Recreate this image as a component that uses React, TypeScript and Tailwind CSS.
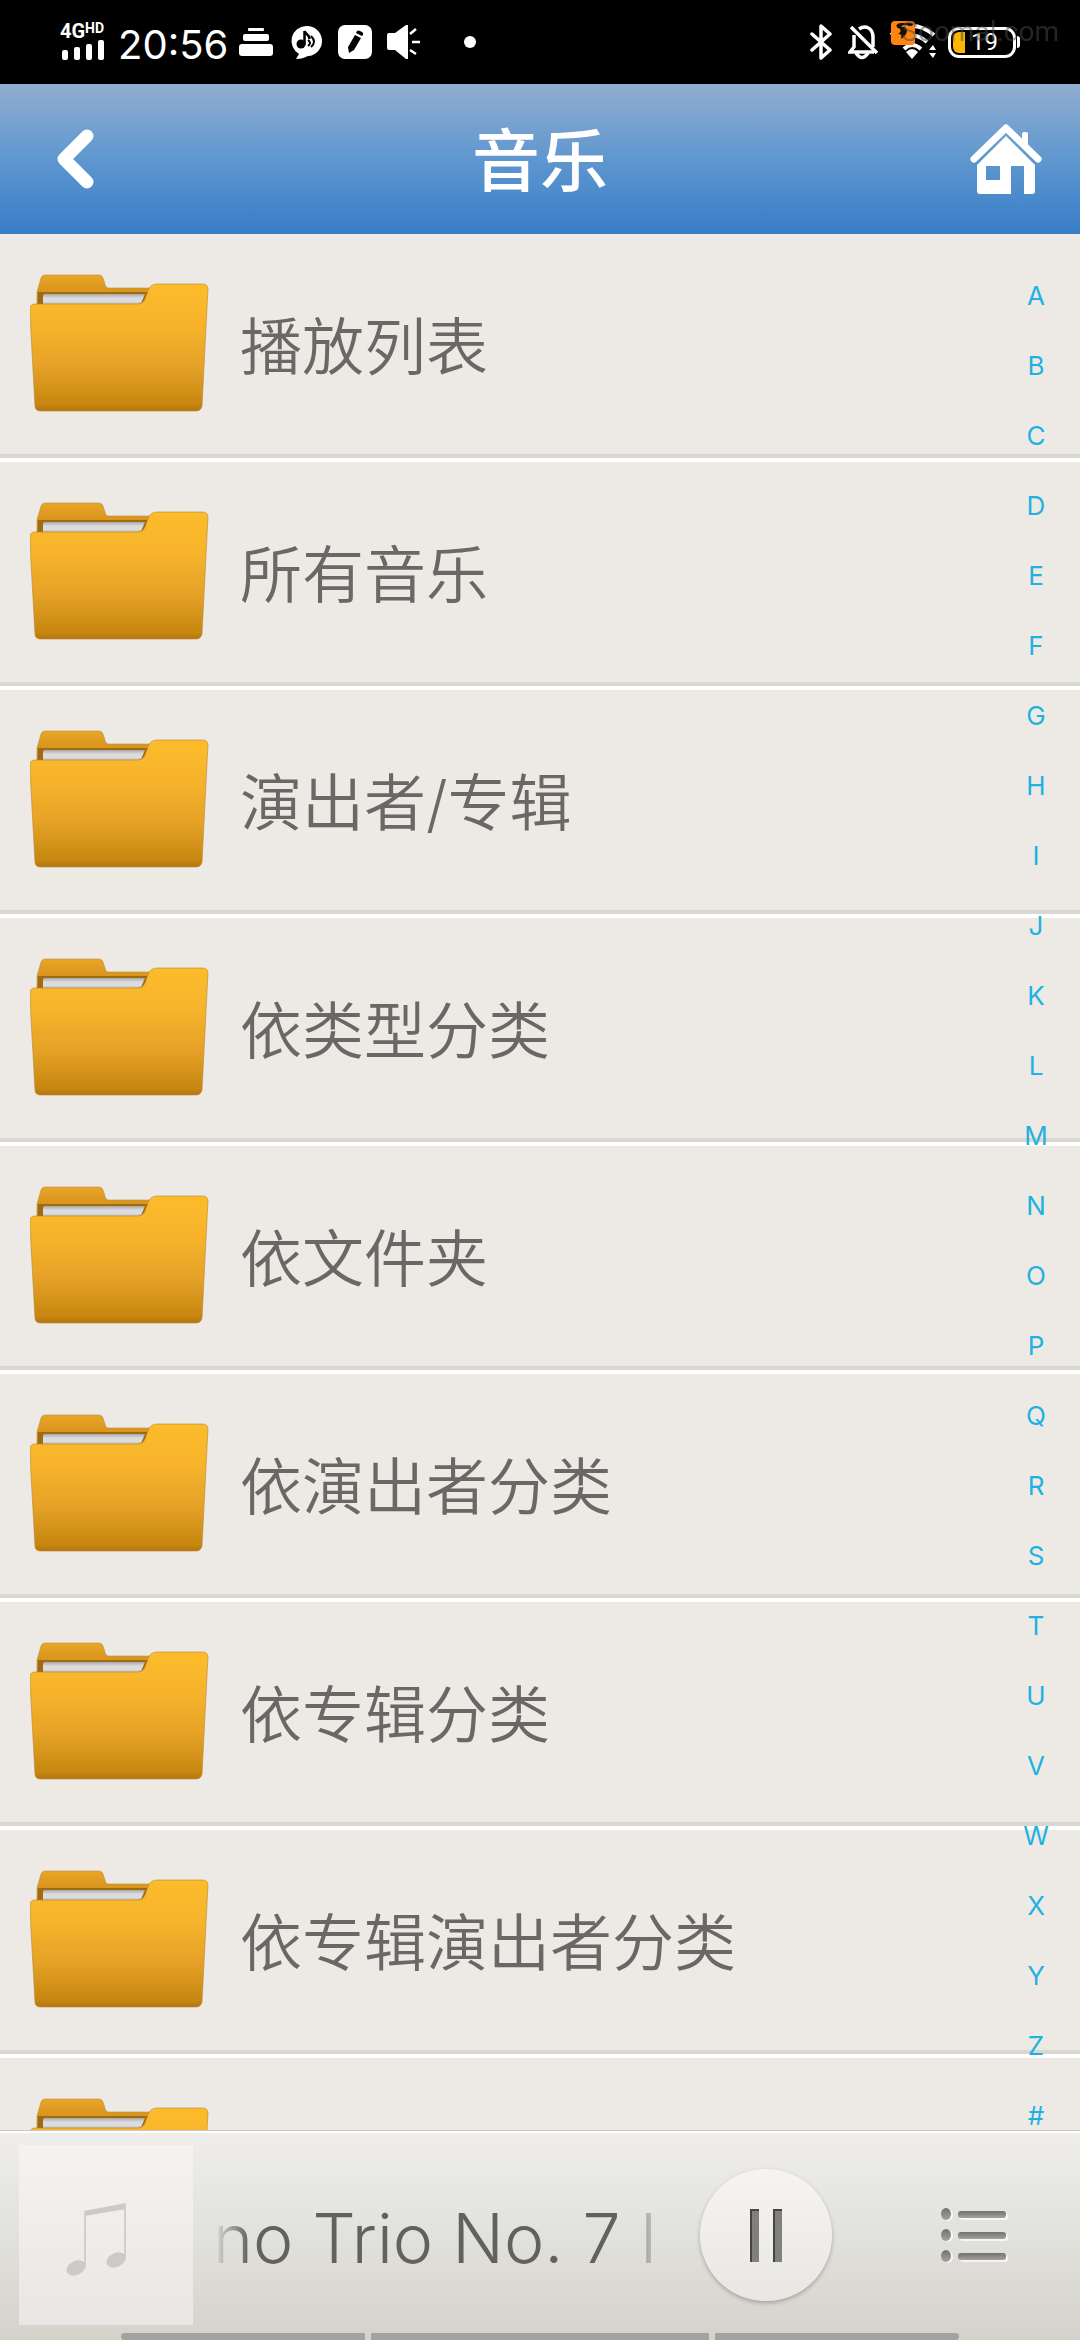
import React from "react";

const folders = [
  "播放列表",
  "所有音乐",
  "演出者/专辑",
  "依类型分类",
  "依文件夹",
  "依演出者分类",
  "依专辑分类",
  "依专辑演出者分类",
  "依作曲者分类",
];

const letters = "ABCDEFGHIJKLMNOPQRSTUVWXYZ#".split("");

function FolderIcon() {
  return (
    <svg width="180" height="140" viewBox="0 0 180 140" className="shrink-0" aria-hidden="true">
      <defs>
        <linearGradient id="front" x1="0" y1="0" x2="0" y2="1">
          <stop offset="0" stopColor="#fcbc2c" />
          <stop offset="0.3" stopColor="#f7b42b" />
          <stop offset="0.65" stopColor="#e5a227" />
          <stop offset="0.95" stopColor="#c6860f" />
          <stop offset="1" stopColor="#b4750f" />
        </linearGradient>
        <linearGradient id="back" x1="0" y1="0" x2="0" y2="1">
          <stop offset="0" stopColor="#e9a627" />
          <stop offset="0.5" stopColor="#d9951d" />
          <stop offset="1" stopColor="#a86c0c" />
        </linearGradient>
        <linearGradient id="paper" x1="0" y1="0" x2="0" y2="1">
          <stop offset="0" stopColor="#a9a8a6" />
          <stop offset="0.4" stopColor="#dcdcdf" />
          <stop offset="0.8" stopColor="#dcdcdf" />
          <stop offset="1" stopColor="#b9b4a8" />
        </linearGradient>
      </defs>
      <path d="M7 34V18L11 4q1-3 4-3h54q3 0 4 3l3 9q1 1 3 1h48l-6 20z" fill="url(#back)" stroke="#b98f45" strokeOpacity="0.6" />
      <path d="M8 18h110l-5 12H8z" fill="#a06a12" />
      <path d="M15 20h100l-3 7q-1 3-4 3H13v-8q0-2 2-2z" fill="url(#paper)" />
      <path d="M5 30h102q6 0 8-5l3-8q2-7 9-7h45q6 0 6 5l-1 18-5 99q-1 5-6 5H11q-6 0-6-5L1 60 0 35q0-5 5-5z" fill="url(#front)" stroke="#b98630" strokeOpacity="0.6" />
    </svg>
  );
}

function StatusBar() {
  return (
    <header className="relative flex h-[84px] shrink-0 items-center justify-between bg-black px-[60px] font-['Roboto',sans-serif] text-white">
      <div className="flex items-center">
        <div className="w-[46px]">
          <div className="flex items-start text-[20px] leading-[16px] font-bold">
            <span>4G</span>
            <span className="text-[14px] leading-[10px]">HD</span>
          </div>
          <svg width="46" height="22" viewBox="0 0 46 22" fill="#fff" aria-hidden="true">
            <rect x="2" y="11" width="6" height="10" rx="2" />
            <rect x="14" y="8" width="6" height="13" rx="2" />
            <rect x="26" y="5" width="6" height="16" rx="2" />
            <rect x="38" y="1" width="6" height="20" rx="2" />
          </svg>
        </div>
        <time className="ml-[12px] w-[108px] pt-[6px] font-['Inter',sans-serif] text-[40px] leading-[48px] whitespace-nowrap">20:56</time>
        <svg className="ml-[13px]" width="34" height="34" viewBox="0 0 34 34" fill="#fff" aria-hidden="true">
          <rect x="9" y="3" width="16" height="3" rx="1" />
          <rect x="4" y="9" width="26" height="7" rx="2" />
          <rect x="0" y="19" width="34" height="12" rx="3" />
        </svg>
        <svg className="ml-[16px]" width="34" height="34" viewBox="0 0 34 34" aria-hidden="true">
          <path d="M17 1a15 15 0 0 1 2 30c-4 2-7 3-12 3l3-5A15 15 0 0 1 17 1z" fill="#fff" />
          <circle cx="12" cy="19" r="4.5" />
          <path d="M15.500 20V6c1 4 5 3 5 8" fill="none" stroke="#000" strokeWidth="2.500" />
          <path d="M19 15q4 3 0 6M22 11q6 6 0 11" fill="none" stroke="#000" strokeWidth="2" />
        </svg>
        <svg className="ml-[15px]" width="34" height="34" viewBox="0 0 34 34" aria-hidden="true">
          <rect width="34" height="34" rx="7" fill="#fff" />
          <path d="M17 10l6 3-7 12-5 3-1-6zM18 8l1-2q1-1 3 0l2 1q2 1 1 3l-1 1z" />
        </svg>
        <svg className="ml-[15px]" width="36" height="34" viewBox="0 0 36 34" aria-hidden="true">
          <path d="M2 8h6L19 0h2v34h-2L8 25H2q-2 0-2-2V10q0-2 2-2z" fill="#fff" />
          <path d="M23 9l6-5M25 17h8M23 25l6 4" stroke="#fff" strokeWidth="2.500" />
        </svg>
        <span className="ml-[41px] size-[12px] rounded-full bg-white" />
      </div>
      <div className="flex items-center">
        <svg width="24" height="36" viewBox="0 0 24 36" fill="none" stroke="#fff" strokeWidth="3.500" strokeLinejoin="round" strokeLinecap="round" aria-hidden="true">
          <path d="M3 10l18 16-9 8V2l9 8L3 26" />
        </svg>
        <svg className="ml-[15px]" width="32" height="36" viewBox="0 0 32 36" fill="none" stroke="#fff" strokeWidth="3.500" aria-hidden="true">
          <path d="M6 11v12l-4 5h24M11 5c7-5 14 0 14 8v10" />
          <path d="M3 3l26 26" />
          <path d="M8 29q6 9 12 0" />
        </svg>
        <svg className="ml-[8px]" width="48" height="42" viewBox="0 0 48 42" aria-hidden="true">
          <path d="M3 14q21-18 43 0M10 21q14-13 29 0M16 28q8-8 17 0" fill="none" stroke="#fff" strokeWidth="4" />
          <path d="M24 38l-6-7q6-6 12 0z" fill="#fff" />
          <path d="M41 29l4-5 3 5zM41 32l4 5 3-5z" fill="#fff" />
          <rect x="3" y="0" width="24" height="24" rx="4" fill="#ff8410" />
          <path d="M13 2h9q3 0 3 2l-2 1h-4l2-1h-6l-2 2h3c6 2 2 9-3 12 1-4 0-5-3-5 4-2 3-5 0-6-3-2-1-5 3-5z" fill="#1a1005" />
        </svg>
        <div className="ml-[12px] flex items-center">
          <div className="flex h-[31px] w-[68px] items-center rounded-[11px] border-[3px] border-white pl-[2px]">
            <span className="h-[21px] w-[12px] rounded-l-[6px] bg-[#fbb503]" />
            <span className="ml-[6px] text-[24px] leading-[24px]">19</span>
          </div>
          <span className="ml-[1px] h-[12px] w-[3px] rounded-r-full bg-white" />
        </div>
      </div>
      <span className="absolute top-[14px] right-[21px] text-[28px] leading-[36px] text-[#4a4a4a] opacity-50">Soomal.com</span>
    </header>
  );
}

function TitleBar() {
  return (
    <div className="flex h-[150px] shrink-0 items-center justify-between bg-linear-to-b from-[#90add0] via-[#5f97cf] to-[#367dc8] px-[37px] text-white">
      <button aria-label="返回" className="flex w-[74px] pl-[17px]">
        <svg width="42" height="62" viewBox="0 0 42 62" fill="none" aria-hidden="true">
          <path d="M33 8L10 31l23 23" stroke="#fff" strokeWidth="13" strokeLinecap="round" strokeLinejoin="round" />
        </svg>
      </button>
      <h1 className="pt-[4px] text-[68px] leading-[88px] font-medium">音乐</h1>
      <button aria-label="主页" className="w-[74px]">
        <svg width="74" height="72" viewBox="0 0 74 72" fill="none" aria-hidden="true">
          <path d="M53 11q0-2 2-2h2q2 0 2 2v14l-6-6z" fill="#fff" />
          <path d="M5 36L37 5l32 31" stroke="#fff" strokeWidth="7" strokeLinecap="round" strokeLinejoin="round" />
          <path d="M37 13L8 42v26q0 3 3 3h31V43h13v28h8q3 0 3-3V42zM17 43v14h14V43z" fill="#fff" fillRule="evenodd" />
        </svg>
      </button>
    </div>
  );
}

function Player() {
  return (
    <footer className="flex h-[210px] shrink-0 flex-col border-t border-[#c9c8c4] bg-linear-to-b from-[#efeeeb] via-[#e1e1dd] to-[#d5d2ca]">
      <div className="flex h-[202px] items-center border-t-2 border-white pt-[4px] pl-[19px]">
        <div className="flex h-[180px] w-[174px] shrink-0 items-center justify-center bg-linear-to-b from-[#f5f2ef] to-[#e9e7e3] pt-[8px] pr-[18px]">
          <svg width="62" height="74" viewBox="0 0 62 74" fill="#cbcac8" aria-hidden="true">
            <path d="M18 9L60 1v6l-42 7z" />
            <path d="M19 9v54M59 3v54" stroke="#d0cfcd" strokeWidth="2" />
            <ellipse cx="10" cy="66" rx="10" ry="7" transform="rotate(-25 10 66)" />
            <ellipse cx="50" cy="58" rx="10" ry="7" transform="rotate(-25 50 58)" />
          </svg>
        </div>
        <p className="ml-[20px] min-w-0 flex-1 overflow-hidden pt-[6px] text-[68px] leading-[88px] font-light whitespace-nowrap text-[#62615e] [mask-image:linear-gradient(to_right,transparent,black_36px,black_calc(100%-36px),transparent)]">
          no Trio No. 7 I
        </p>
        <button aria-label="暂停" className="ml-[38px] flex size-[132px] shrink-0 items-center justify-center gap-[14px] rounded-full bg-linear-to-b from-[#f6f3f0] to-[#e9e7e4] shadow-[0_2px_4px_rgba(0,0,0,0.25)]">
          <span className="h-[53px] w-[9px] border-t-2 border-l-2 border-[#454545] bg-[#80807f]" />
          <span className="h-[53px] w-[9px] border-t-2 border-l-2 border-[#454545] bg-[#80807f]" />
        </button>
        <button aria-label="播放队列" className="mr-[70px] ml-[108px] shrink-0">
          <svg width="70" height="58" viewBox="0 0 70 58" aria-hidden="true">
            <defs>
              <linearGradient id="groove" x1="0" y1="0" x2="0" y2="1">
                <stop offset="0" stopColor="#72716f" />
                <stop offset="1" stopColor="#a3a2a0" />
              </linearGradient>
            </defs>
            {[8, 29, 50].map((y) => (
              <g key={y}>
                <ellipse cx="8" cy={y + 1} rx="5" ry="6" fill="#fff" fillOpacity="0.7" />
                <ellipse cx="6" cy={y} rx="5" ry="6" fill="url(#groove)" />
                <rect x="20" y={y - 1} width="48" height="7" rx="3" fill="#fff" fillOpacity="0.7" />
                <rect x="18" y={y - 3} width="48" height="7" rx="3" fill="url(#groove)" />
              </g>
            ))}
          </svg>
        </button>
      </div>
      <div className="mx-[121px] flex h-[7px] gap-[6px] overflow-hidden rounded-l-full rounded-r-full">
        <span className="w-[244px] bg-[#a3a29e]" />
        <span className="flex-1 bg-[#a3a29e]" />
        <span className="w-[244px] bg-[#a3a29e]" />
      </div>
    </footer>
  );
}

export default function App() {
  return (
    <div className="flex h-screen flex-col bg-[#edeae6] font-['Inter','Noto_Sans_CJK_SC',sans-serif]">
      <StatusBar />
      <TitleBar />
      <main className="relative min-h-0 flex-1 overflow-hidden">
        <ul>
          {folders.map((name) => (
            <li key={name} className="border-b-4 border-white">
              <button className="flex h-[224px] w-full items-center border-b-4 border-[#d9d7d2] pl-[30px] text-left">
                <FolderIcon />
                <span className="ml-[30px] pt-[8px] text-[62px] leading-[80px] font-[350] text-[#6a6865]">{name}</span>
              </button>
            </li>
          ))}
        </ul>
        <nav aria-label="索引" className="absolute inset-y-0 right-[29px] flex w-[30px] flex-col items-center justify-between pt-[48px] text-[26px] leading-[28px] text-[#1fb2e0]">
          {letters.map((l) => (
            <a key={l} href={"#" + l}>{l}</a>
          ))}
        </nav>
      </main>
      <Player />
    </div>
  );
}
